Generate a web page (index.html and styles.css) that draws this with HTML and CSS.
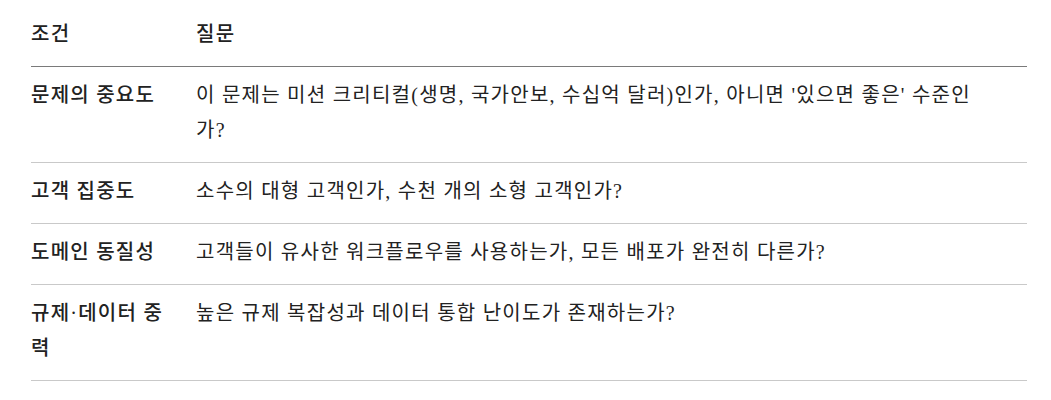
FILE: index.html
```html
<!DOCTYPE html>
<html lang="ko">
<head>
<meta charset="utf-8">
<link rel="stylesheet" href="styles.css">
</head>
<body>
<main class="page">
  <table class="criteria">
    <thead>
      <tr>
        <th class="col-cond">조건</th>
        <th class="col-q">질문</th>
      </tr>
    </thead>
    <tbody>
      <tr>
        <td class="col-cond">문제의 중요도</td>
        <td class="col-q">이 문제는 미션 크리티컬(생명, 국가안보, 수십억 달러)인가, 아니면 '있으면 좋은' 수준인가?</td>
      </tr>
      <tr>
        <td class="col-cond">고객 집중도</td>
        <td class="col-q">소수의 대형 고객인가, 수천 개의 소형 고객인가?</td>
      </tr>
      <tr>
        <td class="col-cond">도메인 동질성</td>
        <td class="col-q">고객들이 유사한 워크플로우를 사용하는가, 모든 배포가 완전히 다른가?</td>
      </tr>
      <tr>
        <td class="col-cond">규제·데이터 중력</td>
        <td class="col-q">높은 규제 복잡성과 데이터 통합 난이도가 존재하는가?</td>
      </tr>
    </tbody>
  </table>
</main>
</body>
</html>
```

FILE: styles.css
```css
html, body {
  margin: 0;
  padding: 0;
  background: #ffffff;
}

.page {
  padding: 6px 24px 0 31px;
}

.criteria {
  width: 996px;
  border-collapse: collapse;
  font-family: "Liberation Serif", "Noto Sans CJK KR", serif;
  font-size: 20px;
  line-height: 35px;
  letter-spacing: 1.25px;
  color: #222222;
  text-align: left;
}

.criteria th,
.criteria td {
  padding: 11px 20px 14px 0;
  vertical-align: top;
}

.criteria th {
  font-weight: 500;
  border-bottom: 1px solid #7a7a7a;
}

.criteria td {
  font-weight: 400;
  border-bottom: 1px solid #c9c9c9;
}

.criteria td.col-cond {
  font-weight: 500;
}

.col-cond {
  width: 145px;
}

.criteria .col-q {
  padding-right: 40px;
}
```
